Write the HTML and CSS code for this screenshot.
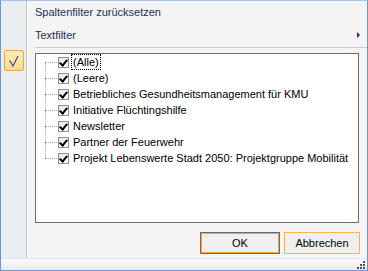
FILE: index.html
```html
<!DOCTYPE HTML>
<html lang="de">
<head>
    <meta name="viewport" content="width=device-width, initial-scale=1">
    <title>Filter</title>
    <link rel="stylesheet" href="styles.css">
</head>
<body>
    <div class="dialog">
        <div class="frame">
            <div class="side">
                <div class="check-btn">
                    <svg width="12" height="12" viewBox="0 0 12 12">
                        <polyline points="1,6 2,6 5,11 10,1" fill="none" stroke="#3a4a8c" stroke-width="1.2"/>
                    </svg>
                </div>
            </div>
            <div class="content">
                <div class="menu-item">Spaltenfilter zurücksetzen</div>
                <div class="menu-item has-sub">Textfilter <span class="arrow"></span></div>
                <div class="sep"></div>
                <div class="list">
                    <ul class="tree">
                        <li><span class="branch"></span><span class="cb"></span><span class="label focus">(Alle)</span></li>
                        <li><span class="branch"></span><span class="cb"></span><span class="label">(Leere)</span></li>
                        <li><span class="branch"></span><span class="cb"></span><span class="label">Betriebliches Gesundheitsmanagement für KMU</span></li>
                        <li><span class="branch"></span><span class="cb"></span><span class="label">Initiative Flüchtingshilfe</span></li>
                        <li><span class="branch"></span><span class="cb"></span><span class="label">Newsletter</span></li>
                        <li><span class="branch"></span><span class="cb"></span><span class="label">Partner der Feuerwehr</span></li>
                        <li><span class="branch"></span><span class="cb"></span><span class="label">Projekt Lebenswerte Stadt 2050: Projektgruppe Mobilität</span></li>
                    </ul>
                </div>
                <div class="buttons">
                    <button class="btn btn-default">OK</button>
                    <button class="btn">Abbrechen</button>
                </div>
            </div>
        </div>
        <div class="status">
            <svg class="grip" width="8" height="8" viewBox="0 0 8 8">
                <rect x="6" y="0" width="2" height="2" fill="#45526a"/>
                <rect x="3" y="3" width="2" height="2" fill="#45526a"/>
                <rect x="6" y="3" width="2" height="2" fill="#45526a"/>
                <rect x="0" y="6" width="2" height="2" fill="#45526a"/>
                <rect x="3" y="6" width="2" height="2" fill="#45526a"/>
                <rect x="6" y="6" width="2" height="2" fill="#45526a"/>
            </svg>
        </div>
    </div>
</body>
</html>
```

FILE: styles.css
```css
body {
    margin: 0;
    font-family: "Liberation Sans", Arial, sans-serif;
    font-size: 11px;
    background: #ffffff;
}
.dialog {
    width: 368px;
    height: 271px;
    box-sizing: border-box;
    border: 1px solid #6a96d2;
    border-top-color: #a9c3e6;
    display: flex;
    flex-direction: column;
    background: #f4f4f4;
}
.frame {
    height: 257px;
    display: flex;
}
.side {
    width: 25px;
    background: #e9eef0;
    border-right: 1px solid #c5c5c5;
}
.check-btn {
    width: 20px;
    height: 21px;
    box-sizing: border-box;
    margin: 49px 0 0 3px;
    border: 1px solid #f2a24a;
    border-radius: 2px;
    background: linear-gradient(#ffecb4, #ffdc8c);
    display: flex;
    align-items: center;
    justify-content: center;
}
.content {
    flex: 1;
    padding-left: 7px;
    border-left: 1px solid #ffffff;
    display: flex;
    flex-direction: column;
}
.menu-item {
    height: 22px;
    line-height: 22px;
    color: #1d3157;
    display: flex;
    align-items: center;
}
.has-sub {
    height: 23px;
    justify-content: space-between;
    padding-right: 7px;
}
.arrow {
    width: 0;
    height: 0;
    border-top: 3px solid transparent;
    border-bottom: 3px solid transparent;
    border-left: 3px solid #1c2d6b;
}
.sep {
    height: 1px;
    background: #c8c8c8;
    margin-top: 1px;
}
.list {
    margin: 5px 8px 0 0;
    height: 170px;
    box-sizing: border-box;
    border: 1px solid #6d6d6d;
    background: #ffffff;
}
.tree {
    list-style: none;
    margin: 0;
    padding: 0 0 0 9px;
    position: relative;
}
.tree::before {
    content: "";
    position: absolute;
    left: 9px;
    top: 8px;
    bottom: 8px;
    border-left: 1px dotted #a0a0a0;
}
.tree li {
    height: 16px;
    display: flex;
    align-items: center;
    color: #000000;
}
.branch {
    width: 12px;
    border-top: 1px dotted #a0a0a0;
    margin-right: 1px;
}
.cb {
    width: 11px;
    height: 11px;
    box-sizing: border-box;
    border: 1px solid #8e8f8f;
    background: linear-gradient(135deg, #e8e8e8, #ffffff);
    position: relative;
}
.cb::after {
    content: "";
    position: absolute;
    left: 2px;
    top: 0px;
    width: 3px;
    height: 6px;
    border-right: 2px solid #000000;
    border-bottom: 2px solid #000000;
    transform: rotate(40deg);
}
.label {
    margin-left: 2px;
    padding: 0 1px;
    border: 1px dotted transparent;
    line-height: 14px;
    white-space: nowrap;
}
.label.focus {
    border-color: #000000;
}
.buttons {
    display: flex;
    justify-content: flex-end;
    gap: 4px;
    margin-top: 9px;
    padding-right: 7px;
}
.btn {
    height: 22px;
    width: 76px;
    box-sizing: border-box;
    border: 1px solid #f9b350;
    background: #efefef;
    font-family: "Liberation Sans", Arial, sans-serif;
    font-size: 11px;
    color: #000000;
    padding: 0;
}
.btn-default {
    width: 80px;
    border-color: #6b6b6b;
    box-shadow: inset 0 0 0 1px #f5a33c;
}
.status {
    height: 12px;
    box-sizing: border-box;
    border-top: 1px solid #dde5ee;
    background: linear-gradient(#fbfbfd, #e9e9ef);
    display: flex;
    justify-content: flex-end;
    align-items: flex-end;
    padding: 0 2px 1px 0;
}
```
